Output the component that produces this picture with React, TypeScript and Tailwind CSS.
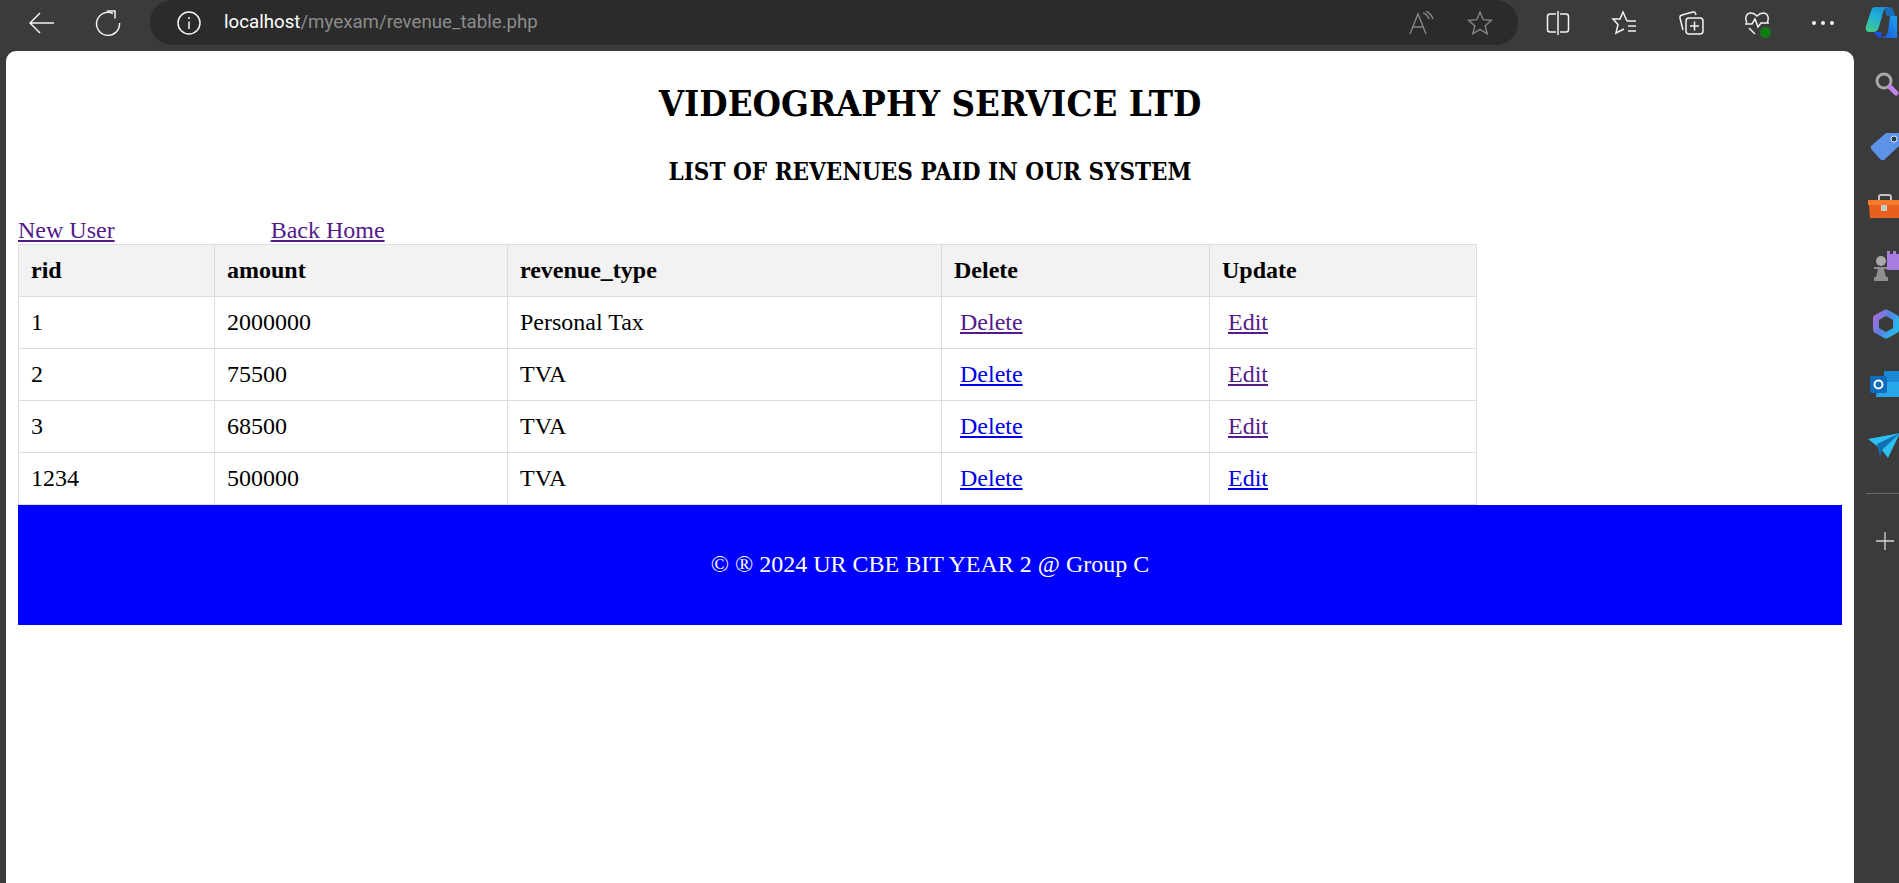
const rows = [
  { rid: "1", amount: "2000000", type: "Personal Tax", deleteVisited: true, editVisited: true },
  { rid: "2", amount: "75500", type: "TVA", deleteVisited: false, editVisited: true },
  { rid: "3", amount: "68500", type: "TVA", deleteVisited: false, editVisited: true },
  { rid: "1234", amount: "500000", type: "TVA", deleteVisited: false, editVisited: false },
];

function TopBar() {
  return (
    <div className="h-[51px] shrink-0 flex items-start bg-[#3b3b3b] text-white overflow-hidden">
      <svg className="ml-[29px] mt-[10px] shrink-0" width="26" height="26" viewBox="0 0 26 26" fill="none" stroke="#f2f2f2" strokeWidth="1.5">
        <path d="M1 13H25M11 3L1 13L11 23" />
      </svg>
      <svg className="ml-[40px] mt-[10px] shrink-0" width="26" height="26" viewBox="0 0 26 26" fill="none" stroke="#f2f2f2" strokeWidth="1.5">
        <path d="M18 3.5A11.5 11.5 0 1 0 24.5 13" />
        <path d="M12 1H20V8.5" />
      </svg>
      <div className="ml-[29px] w-[1368px] h-[45px] shrink-0 rounded-[22px] bg-[#2b2b2b] flex items-center">
        <svg className="ml-[27px] shrink-0" width="24" height="24" viewBox="0 0 24 24" fill="none" stroke="#f5f5f5" strokeWidth="1.5">
          <circle cx="12" cy="12" r="11" />
          <path d="M12 10.5V18M12 6V8" />
        </svg>
        <div className="ml-[23px] text-[18.7px] font-['Roboto',sans-serif]">
          <span className="text-white">localhost</span>
          <span className="text-[#8c8c8c]">/myexam/revenue_table.php</span>
        </div>
        <svg className="ml-auto shrink-0" width="26" height="24" viewBox="0 0 26 24" fill="none" stroke="#858585" strokeWidth="1.4">
          <path d="M2 23L10 3L18 23M5 16H15M15 2C18 3 20 5 21 8M18 0C22 2 24 5 25 8" />
        </svg>
        <svg className="ml-[33px] mr-[25px] shrink-0" width="26" height="26" viewBox="0 0 26 26" fill="none" stroke="#858585" strokeWidth="1.4">
          <path d="M13 2L16.2 9.7L24.5 10.3L18.2 15.7L20.2 23.8L13 19.4L5.8 23.8L7.8 15.7L1.5 10.3L9.8 9.7Z" />
        </svg>
      </div>
      <svg className="ml-[28px] mt-[11px] shrink-0" width="24" height="24" viewBox="0 0 24 24" fill="none" stroke="#f2f2f2" strokeWidth="1.5">
        <path d="M10 3H4Q1.5 3 1.5 5.5V18.5Q1.5 21 4 21H10M14 3H20Q22.500 3 22.500 5.5V18.5Q22.500 21 20 21H14M12 0V24" />
      </svg>
      <svg className="ml-[41px] mt-[10px] shrink-0" width="26" height="26" viewBox="0 0 26 26" fill="none" stroke="#f2f2f2" strokeWidth="1.5">
        <path d="M16 11L12 2L9 9H2L7 14.500L5 23L13 19" />
        <path d="M16 11H25M17 16H25M17 21H25" />
      </svg>
      <svg className="ml-[41px] mt-[10px] shrink-0" width="26" height="26" viewBox="0 0 26 26" fill="none" stroke="#f2f2f2" strokeWidth="1.5">
        <path d="M5 20L2 8Q1.500 5.500 4 5L15 2Q17 1.500 17.500 3.500L18 5" />
        <rect x="8" y="8" width="17" height="16" rx="3" />
        <path d="M16.500 11.500V20.500M12 16H21" />
      </svg>
      <div className="relative ml-[40px] mt-[10px] shrink-0 w-[26px] h-[26px]">
        <svg width="26" height="26" viewBox="0 0 26 26" fill="none" stroke="#f2f2f2" strokeWidth="1.5">
          <path d="M3 13C0 7 3 3 7 3C10 3 12 5 13 6C14 5 16 3 19 3C23 3 26 7 23 13" />
          <path d="M1 14H8L11 9L14 17L17 13H25M5 18L11 24" />
        </svg>
        <div className="absolute right-[-1px] bottom-[-2px] w-[11px] h-[11px] rounded-full bg-[#107c10]" />
      </div>
      <div className="ml-[42px] mt-[21px] shrink-0 flex gap-[5px]">
        <div className="w-[4px] h-[4px] rounded-full bg-[#f2f2f2]" />
        <div className="w-[4px] h-[4px] rounded-full bg-[#f2f2f2]" />
        <div className="w-[4px] h-[4px] rounded-full bg-[#f2f2f2]" />
      </div>
      <svg className="ml-[31px] mt-[7px] shrink-0" width="32" height="33" viewBox="0 0 32 33">
        <defs>
          <linearGradient id="copilotA" x1="0.2" y1="1" x2="0.7" y2="0">
            <stop offset="0" stopColor="#45c98a" />
            <stop offset="0.6" stopColor="#1fb0d8" />
            <stop offset="1" stopColor="#1a8fd0" />
          </linearGradient>
          <linearGradient id="copilotB" x1="0" y1="1" x2="1" y2="0">
            <stop offset="0" stopColor="#1e4fd8" />
            <stop offset="1" stopColor="#1aa5f0" />
          </linearGradient>
        </defs>
        <path d="M10 0H24C20 1 18 4 17 9L14 20C13 24 11 25 8 25H4C1 25 0 22 1 19L6 4C7 1 8 0 10 0Z" fill="url(#copilotA)" />
        <path d="M24 0C27 0 29 3 30 9H22L20 5C21 2 22 0 24 0Z" fill="#1a6fb8" />
        <path d="M25 9H32V31H16C20 30 22 28 23 24Z" fill="url(#copilotB)" />
        <path d="M8 25H17L16 31C13 31 11 29 10 27Z" fill="#1e4fd8" />
      </svg>
    </div>
  );
}

function Sidebar() {
  return (
    <div className="w-[45px] shrink-0 bg-[#3b3b3b] overflow-hidden flex flex-col">
      <svg className="ml-[20px] mt-[20px] shrink-0" width="26" height="26" viewBox="0 0 26 26" fill="none">
        <circle cx="10" cy="10" r="7" stroke="#a8a8a8" strokeWidth="3" />
        <path d="M16 16L22 22" stroke="#c084e8" strokeWidth="5" strokeLinecap="round" />
      </svg>
      <svg className="ml-[16px] mt-[34px] shrink-0" width="30" height="30" viewBox="0 0 30 30">
        <path d="M1 15L16 2H30V14L14 29Q12 30 10 28L2 19Q0 17 1 15Z" fill="#5c93e6" />
        <circle cx="24" cy="8" r="3" fill="#2b3b55" stroke="#e8eefc" strokeWidth="1" />
      </svg>
      <svg className="ml-[14px] mt-[33px] shrink-0" width="32" height="30" viewBox="0 0 32 30">
        <path d="M11 6V3Q11 1 13 1H21Q23 1 23 3V6" fill="none" stroke="#c4c4c4" strokeWidth="2" />
        <path d="M1 11H32V24H2Z" fill="#e8601e" />
        <path d="M0 6H32V11H0Z" fill="#f47a2e" />
        <rect x="13" y="11" width="6" height="6" fill="#c9c9c9" />
      </svg>
      <div className="ml-[19px] mt-[26px] flex items-end shrink-0">
        <svg width="26" height="32" viewBox="0 0 26 32">
          <circle cx="8" cy="11" r="5" fill="#a9a9a9" />
          <path d="M1 17H15V19H11L13 27H15V31H1V27H3L5 19H1Z" fill="#8f8f8f" />
          <path d="M14 1H17V4H20V1H23V4H26V20H14Z" fill="#a77de0" />
        </svg>
      </div>
      <svg className="ml-[17px] mt-[27px] shrink-0" width="30" height="30" viewBox="0 0 30 30" fill="none">
        <defs>
          <linearGradient id="m365" x1="0" y1="0" x2="1" y2="0.6">
            <stop offset="0" stopColor="#a86ed8" />
            <stop offset="0.5" stopColor="#5b7fe0" />
            <stop offset="1" stopColor="#2db4e8" />
          </linearGradient>
        </defs>
        <path d="M15 3.500L25 9V21L15 26.500L5 21V9Z" stroke="url(#m365)" strokeWidth="6" strokeLinejoin="round" />
        <path d="M11 12L15 9L22 13V18L16 15Z" fill="#3b3b3b" />
      </svg>
      <svg className="ml-[16px] mt-[31px] shrink-0" width="30" height="30" viewBox="0 0 30 30">
        <path d="M14 1H30V27H6V19H14Z" fill="#1a8ad4" />
        <path d="M16 12H30V27H6Z" fill="#28a8ea" />
        <rect x="0" y="6" width="17" height="17" rx="2" fill="#0f6cbd" />
        <circle cx="8.500" cy="14.500" r="4" fill="none" stroke="#ffffff" strokeWidth="2" />
      </svg>
      <svg className="ml-[14px] mt-[32px] shrink-0" width="32" height="26" viewBox="0 0 32 26">
        <path d="M0 7L32 1L20 26L14 18Z" fill="#2cc0f2" />
        <path d="M9 12L32 1L14 18L12 25Z" fill="#0f6fb0" />
      </svg>
      <div className="ml-[12px] mt-[35px] h-px shrink-0 bg-[#6a6a6a]" />
      <svg className="ml-[22px] mt-[38px] shrink-0" width="18" height="18" viewBox="0 0 18 18" stroke="#d6d6d6" strokeWidth="1.300">
        <path d="M9 0V18M0 9H18" />
      </svg>
    </div>
  );
}

function CellLink({ label, visited }: { label: string; visited: boolean }) {
  return (
    <a href="#" className={visited ? "ml-[6px] underline text-[#551a8b]" : "ml-[6px] underline text-[#0000ee]"}>
      {label}
    </a>
  );
}

export default function App() {
  return (
    <div className="w-[1899px] h-[883px] flex flex-col overflow-hidden bg-[#3b3b3b] font-['Liberation_Serif',serif] text-black">
      <TopBar />
      <div className="flex flex-1 min-h-0">
        <div className="w-[6px] shrink-0" />
        <main className="w-[1848px] shrink-0 bg-white rounded-t-[10px] px-[12px]">
          <h1 className="mt-[30px] text-center text-[36.300px] leading-[46px] font-bold font-['DejaVu_Serif_Condensed','DejaVu_Serif',serif]">VIDEOGRAPHY SERVICE LTD</h1>
          <h2 className="mt-[31px] text-center text-[24px] leading-[28px] font-bold font-['DejaVu_Serif_Condensed','DejaVu_Serif',serif]">LIST OF REVENUES PAID IN OUR SYSTEM</h2>
          <div className="mt-[31px] h-[27px] flex gap-[156px] text-[24px] leading-[27px] text-[#551a8b]">
            <a href="#" className="underline">New User</a>
            <a href="#" className="underline">Back Home</a>
          </div>
          <table className="w-[1458px] table-fixed border-collapse text-[24px] leading-[27px]">
            <colgroup>
              <col className="w-[196px]" />
              <col className="w-[293px]" />
              <col className="w-[434px]" />
              <col className="w-[268px]" />
              <col className="w-[267px]" />
            </colgroup>
            <thead>
              <tr className="h-[52px] bg-[#f2f2f2]">
                <th className="border border-[#dddddd] px-[12px] text-left font-bold">rid</th>
                <th className="border border-[#dddddd] px-[12px] text-left font-bold">amount</th>
                <th className="border border-[#dddddd] px-[12px] text-left font-bold">revenue_type</th>
                <th className="border border-[#dddddd] px-[12px] text-left font-bold">Delete</th>
                <th className="border border-[#dddddd] px-[12px] text-left font-bold">Update</th>
              </tr>
            </thead>
            <tbody>
              {rows.map((row) => (
                <tr key={row.rid} className="h-[52px]">
                  <td className="border border-[#dddddd] px-[12px]">{row.rid}</td>
                  <td className="border border-[#dddddd] px-[12px]">{row.amount}</td>
                  <td className="border border-[#dddddd] px-[12px]">{row.type}</td>
                  <td className="border border-[#dddddd] px-[12px]">
                    <CellLink label="Delete" visited={row.deleteVisited} />
                  </td>
                  <td className="border border-[#dddddd] px-[12px]">
                    <CellLink label="Edit" visited={row.editVisited} />
                  </td>
                </tr>
              ))}
            </tbody>
          </table>
          <footer className="h-[120px] flex items-center justify-center bg-[#0000ff] text-white text-[24px] pb-[2px]">
            © ® 2024 UR CBE BIT YEAR 2 @ Group C
          </footer>
        </main>
        <Sidebar />
      </div>
    </div>
  );
}
